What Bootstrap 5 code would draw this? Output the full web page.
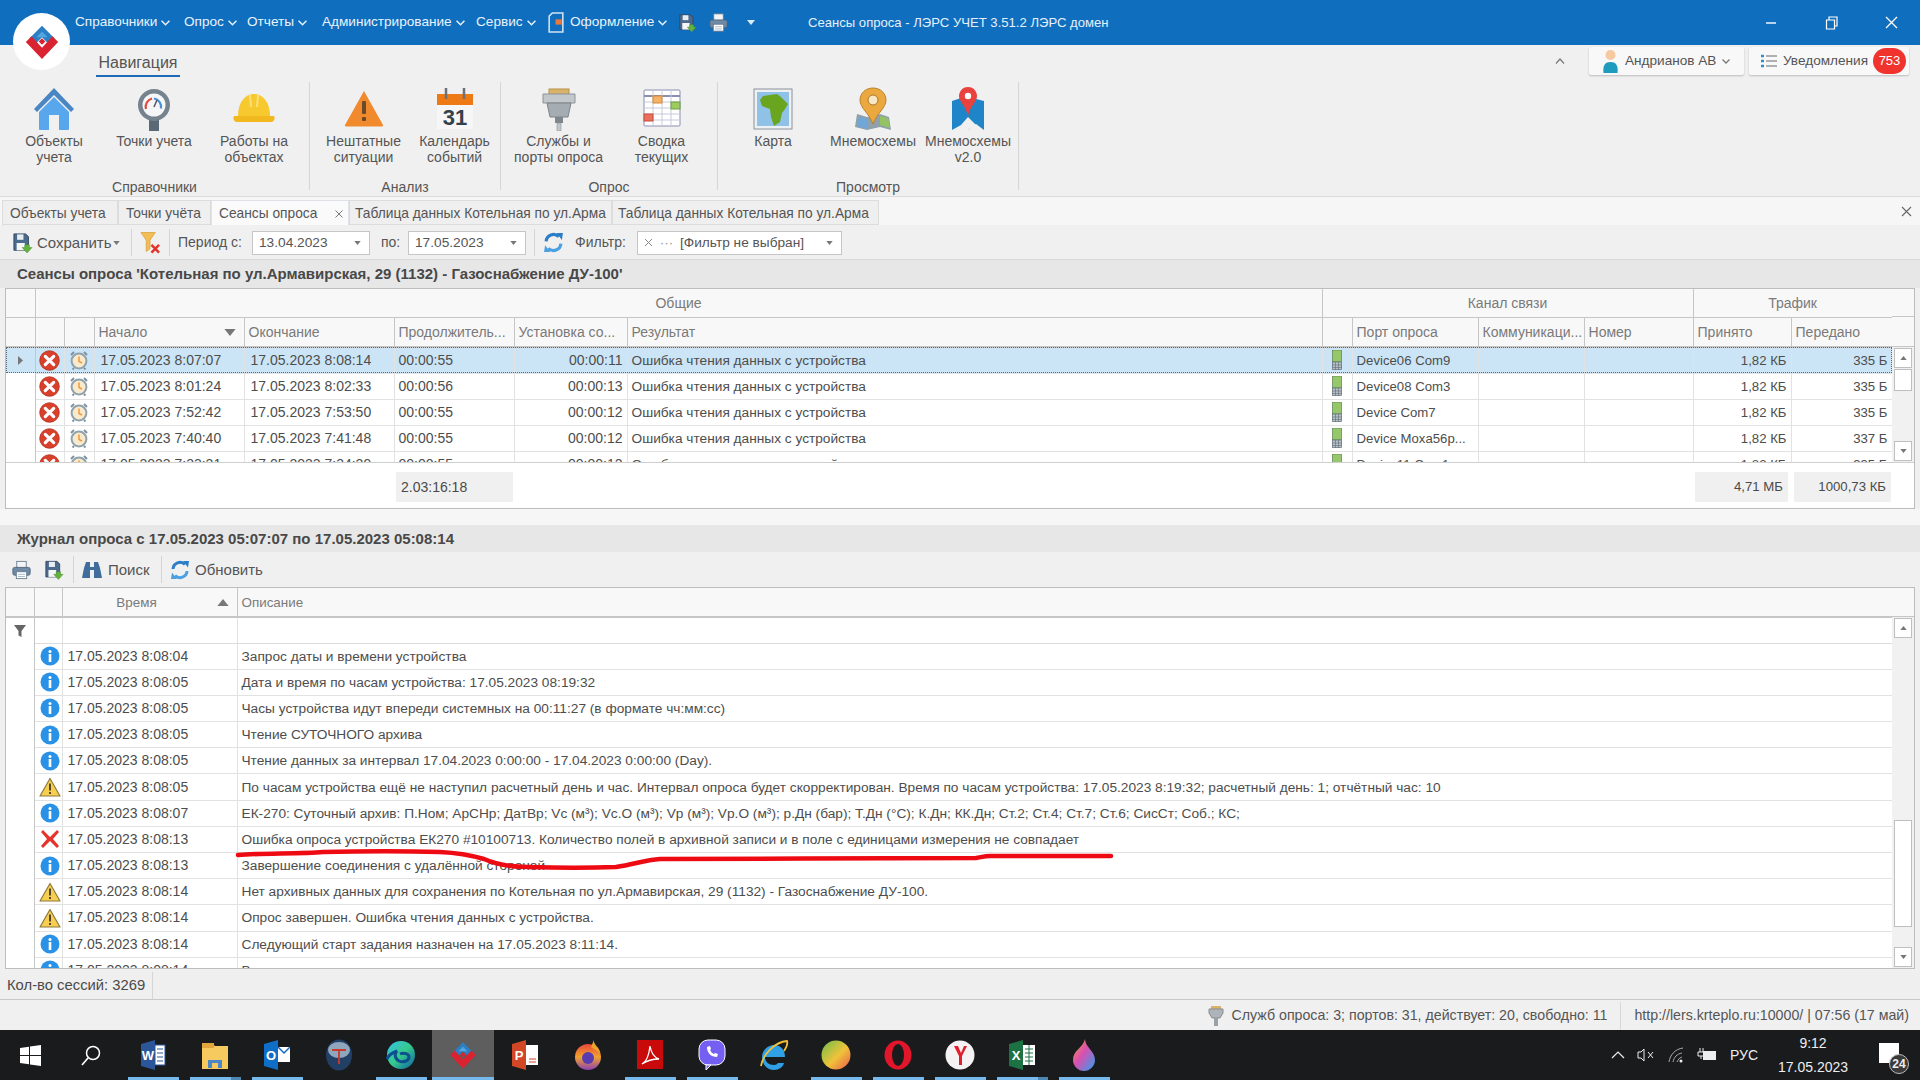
<!DOCTYPE html>
<html lang="ru"><head><meta charset="utf-8"><title>Сеансы опроса</title>
<link href="https://cdn.jsdelivr.net/npm/bootstrap@5.3.0/dist/css/bootstrap.min.css" rel="stylesheet">
<style>
html,body{height:1080px;overflow:hidden}
body{font:14px/1.2 "Liberation Sans",Arial,sans-serif;color:#4a4a4a;background:#f0f0f0}
svg{display:block;flex:none}
.app{height:1080px;width:1920px;position:relative;display:flex;flex-direction:column}
.logo{position:absolute;left:13px;top:13px;width:57px;height:57px;border-radius:50%;background:#fff;display:flex;align-items:center;justify-content:center;z-index:5}
.titlebar{height:45px;background:#0f6ebe;color:#fff;padding:0 0 0 75px;border:0;flex:none}
.menu{display:grid;grid-template-columns:109px 63px 75px 154px 71px 23px 109px 30px 38px 20px;align-items:center;font-size:13.6px}
.menu a{color:#eaf3fb;text-decoration:none;display:flex;align-items:center;gap:4px;white-space:nowrap}
.wtitle{margin-left:41px;width:300px;color:#e6f0fa;white-space:nowrap;font-size:13.1px}
.wctl{margin-left:auto;display:grid;grid-template-columns:60px 60px 60px;justify-items:center;padding-right:0;width:180px;margin-right:-1px}
.rtop{height:37px;display:flex;align-items:flex-start;padding-left:96px;flex:none}
.rtab{font-size:16px;height:32px;line-height:36px;border-bottom:2px solid #1b6bb5;color:#555;width:84px;white-space:nowrap;text-align:center}
.rright{margin-left:auto;display:flex;align-items:center;padding:2px 11px 0 0;gap:5px}
.collapse-up{margin-right:19px}
.ubtn{height:28px;background:#f8f8f8;box-shadow:0 1px 2px #bbb;border-radius:2px;display:flex;align-items:center;color:#555;position:relative;font-size:13.6px}
.ubtn.u1{width:155px;padding-left:13px;gap:6px}
.ubtn.u2{width:160px;padding-left:12px;gap:6px}
.nbadge{position:absolute;right:3px;top:1px;width:33px;height:26px;border-radius:13px;background:#f0332c;color:#fff;text-align:center;line-height:26px;font-size:13px}
.ribbon{height:115px;display:flex;border-bottom:1px solid #dcdcdc;flex:none;padding-bottom:7px;color:#555}
.rg{display:flex;flex-direction:column;border-right:1px solid #d6d6d6;height:108px}
.rg1{width:310px}.rg2{width:191px}.rg3{width:217px}.rg4{width:301px}
.ritems{display:grid;flex:1;padding-top:5px}
.rg1 .ritems{grid-template-columns:100px 100px 100px;padding-left:4px}
.rg2 .ritems{grid-template-columns:91px 91px;padding-left:8px}
.rg3 .ritems{grid-template-columns:103px 103px;padding-left:6px}
.rg4 .ritems{grid-template-columns:100px 100px 90px;padding-left:5px}
.ri{display:flex;flex-direction:column;align-items:center;text-align:center;line-height:16px;white-space:nowrap}
.ri svg{margin-bottom:2px}
.rlab{text-align:center;line-height:14px;height:14px;margin-bottom:-4px}
.tabsbar{height:28px;padding:3px 0 0 2px;background:#f6f6f6;flex:none;position:relative}
.tabsbar .nav-tabs{display:grid;grid-template-columns:116px 93px 138px 263px 267px;border:0;--bs-nav-link-padding-x:0;--bs-nav-link-padding-y:0}
.tabsbar .nav-link{height:25px;line-height:25px;background:#efefef;border:1px solid #dcdcdc;border-radius:0;margin:0;color:#555;padding:0 0 0 5px;white-space:nowrap;font-size:13.75px;text-align:left;display:flex;justify-content:space-between}
.tabsbar .nav-item:nth-child(-n+2) .nav-link{padding-left:7px}
.tabsbar .nav-link.active{background:#fafafa;color:#555;border-bottom:0;margin-top:0;position:relative;padding-left:7px}
.tabx{position:absolute;right:5px;top:9px}
.tb{display:grid;align-items:center;flex:none;white-space:nowrap;background:#f0f0f0;color:#555}
.tb1{padding:1px 0 0 13px;height:35px;border-bottom:1px solid #d8d8d8;grid-template-columns:24px 76px 18px 9px 29px 9px 74px 118px 38px 118px 17px 32px 62px 205px}
.tb2{padding-left:12px;height:35px;grid-template-columns:33px 28px 9px 26px 53px 9px 25px auto;justify-content:start}
.big{font-size:15px}
.vsep{width:1px;height:27px;background:#d4d4d4}
.tb .mid{justify-self:center}
.pl{padding-left:11px}
.ctl{height:24px;padding:0 0 0 6px;border:1px solid #c6c6c6;border-radius:0;background:#fff;color:#555;font-size:13.7px;display:flex;align-items:center;line-height:22px}
.dots{width:27px;text-align:center;color:#999}
.sect{background:#e7e7e7;font-weight:700;color:#484848;padding-left:17px;flex:none;display:flex;align-items:center;font-size:15px}
.s1{height:28px}.s2{height:27px}
.grid{margin-left:5px;width:1910px;border:1px solid #bdbdbd;background:#fff;flex:none}
.gw{width:1886px;overflow:hidden}
.grid .table{table-layout:fixed;width:1886px;margin:0;border-collapse:collapse;color:#4d4d4d;font-size:14px}
.grid .table td,.grid .table th{padding:0 4px;height:26px;border:1px solid #e2e2e2;white-space:nowrap;overflow:hidden;text-overflow:clip;font-weight:400;vertical-align:middle;box-shadow:none;line-height:15px}
.grid .table td.t{padding-left:6px}
.grid .table thead th{background:#f8f8f8;color:#7a7a7a;border-color:#c6c6c6;border-top:0;height:28px}
.g1 .table thead th{padding-top:2px}
.g2 .table thead th{font-size:13.4px}
.grid .table thead tr:last-child th{height:29px;border-bottom:2px solid #c6c6c6}
.g1 .table thead tr:last-child th{height:30px}
.grid .table thead th:first-child,.grid .table td:first-child{border-left:0}
.grid .table td.ind{border-top:0;border-bottom:0;border-right-color:#c6c6c6;padding:0}
.grid .table td.ic{padding:0}
.g2 .table td.ic{padding-left:3px}
.g2 .table td.t{padding-left:5px}
.ic svg{margin:auto}
.ind svg{margin:auto}
.hcen{margin-right:10px}
.grid .table td.desc{font-size:13.7px}
.grid .table td.lat{font-size:13.2px}
.grid .table tr.sel td{background:#cbe5f6}
tr.sel{outline:1px dotted #5d6a75;outline-offset:-1px}
.g1 .gw{height:173px}
.g2 .gw{height:380px}
.g2 .table td,.g2 .table td.ic{height:26.2px}
.g2 .table .fil td{height:26px;border-bottom-color:#dcdcdc}
.sb{width:22px;display:flex;flex-direction:column;flex:none;background:#f1f1f1}
.sbh{background:#f8f8f8;border-bottom:1px solid #c6c6c6;flex:none}
.sbb{width:18px;height:20px;margin:1px 2px;background:#fff;border:1px solid #bfbfbf;flex:none;display:flex;align-items:center;justify-content:center}
.sbt{width:18px;margin:0 2px;background:#fff;border:1px solid #bfbfbf;flex:none}
.gfoot{height:46px;padding-top:9px;display:grid;grid-template-columns:390px 117px 1182px 93px 6px 97px;border-top:1px solid #cfcfcf;align-items:stretch}
.gfoot div{height:30px;line-height:30px;padding:0 5px;background:#f0f0f0}
.gfoot .lat{font-size:13.2px}
.gfoot .none{background:none}
.bar3{height:28px;margin-top:3px;display:flex;flex:none;background:#efefef;border-bottom:1px solid #c8c8c8}
.bar3 span{width:153px;padding-left:7px;line-height:27px;border-right:1px solid #d5d5d5;white-space:nowrap;font-size:14.8px}
.status{height:30px;padding-top:2px;display:flex;align-items:center;justify-content:flex-end;background:#f0f0f0;flex:none;white-space:nowrap;color:#555;font-size:14.2px}
.status .a{display:flex;align-items:center;gap:8px;padding-right:13px;border-right:1px solid #d8d8d8;height:28px}
.status .b{padding:0 11px 0 13px}
.taskbar{height:50px;background:#1a1b1d;display:flex;flex:none;color:#eee;align-items:stretch;position:relative}
.tk{width:62.07px;display:flex;align-items:center;justify-content:center;position:relative;flex:none}
.tk.w{width:60px}
.tk.run::after{content:"";position:absolute;left:6px;right:5px;bottom:0;height:3px;background:#76b9ed}
.tk.stack::after{background:linear-gradient(90deg,#76b9ed 80%,#4f87b3 80%)}
.tk.act{background:#5e5e5e}
.tk.act::after{left:0;right:0}
.tray{margin-left:auto;display:flex;align-items:center;white-space:nowrap;gap:12.500px}
.clock{width:93px;text-align:center;font-size:14px;line-height:24px;margin:0 0 0 -4px;display:flex;flex-direction:column}
.notif{position:relative;width:60px;height:50px;margin-left:-12px}
.notif i{position:absolute;left:19px;top:13px;width:20px;height:20px;background:#fff}
.notif b{position:absolute;left:29px;top:24px;width:20px;height:20px;border-radius:50%;background:#3a3a3a;border:1px solid #bbb;font-size:12px;line-height:18px;text-align:center;font-style:normal}
.note{position:absolute;left:0;top:0;pointer-events:none;z-index:4}
</style></head><body>
<svg width="0" height="0" style="position:absolute">
<defs>
<linearGradient id="fx" x1="0" y1="0" x2="0" y2="1"><stop offset="0" stop-color="#e8463d"/><stop offset=".5" stop-color="#f0a32a"/><stop offset="1" stop-color="#8d3fb6"/></linearGradient>
<linearGradient id="flame" x1="0" y1="0" x2="1" y2="1"><stop offset="0" stop-color="#f0a23a"/><stop offset=".45" stop-color="#d94fb0"/><stop offset="1" stop-color="#2aa3f0"/></linearGradient>
<linearGradient id="ball" x1="0" y1="0" x2="1" y2="1"><stop offset="0" stop-color="#6cbf4b"/><stop offset=".55" stop-color="#f0c23a"/><stop offset="1" stop-color="#ea5a4a"/></linearGradient>
<linearGradient id="edge" x1="0" y1="0" x2="1" y2="1"><stop offset="0" stop-color="#35c1f1"/><stop offset=".5" stop-color="#36c98a"/><stop offset="1" stop-color="#0d5ea8"/></linearGradient>
</defs>
<symbol id="logo" viewBox="0 0 40 40"><polygon points="20,3 33,16 27,22 20,15 13,22 7,16" fill="#2b7fc4"/><polygon points="20,9 26,15 20,15 14,15" fill="#51a6e0"/><polygon points="3,20 9,14 20,26 31,14 37,20 20,38" fill="#d92330"/><polygon points="20,16 23.500,19.500 20,23 16.500,19.500" fill="#d92330"/></symbol>
<symbol id="err" viewBox="0 0 20 20"><circle cx="10" cy="10" r="9.300" fill="#d9402c" stroke="#b8321f" stroke-width=".8"/><path d="M6 6l8 8M14 6l-8 8" stroke="#fff" stroke-width="3" stroke-linecap="round"/></symbol>
<symbol id="clk" viewBox="0 0 20 20"><path d="M2 5l3-3M18 5l-3-3M5 18l-1.500 1.500M15 18l1.500 1.500" stroke="#7f929f" stroke-width="2"/><circle cx="10" cy="11" r="7.400" fill="#fbe9cc" stroke="#8ea2ae" stroke-width="2"/><path d="M10 6.500v5l3 1.500" stroke="#ee9a3a" stroke-width="1.500" fill="none"/></symbol>
<symbol id="inf" viewBox="0 0 20 20"><circle cx="10" cy="10" r="9.500" fill="#2a92e6"/><circle cx="10" cy="5.500" r="1.500" fill="#fff"/><rect x="8.700" y="8" width="2.600" height="8" fill="#fff"/></symbol>
<symbol id="wrn" viewBox="0 0 22 20"><path d="M11 1.500L21 19H1z" fill="#f6cf52" stroke="#8d7a3c" stroke-width="1.200" stroke-linejoin="round"/><rect x="10" y="6.500" width="2" height="7" fill="#55492a"/><rect x="10" y="15" width="2" height="2" fill="#55492a"/></symbol>
<symbol id="xr" viewBox="0 0 20 20"><path d="M3 1l7 7 7-7 2 2-6 7 6 7-2 2-7-7-7 7-2-2 6-7-6-7z" fill="#e4342b"/></symbol>
<symbol id="dev" viewBox="0 0 10 20"><rect x=".5" y="0" width="9" height="12" fill="#97c76b" stroke="#5b7f4e" stroke-width=".7"/><rect x=".5" y="12" width="9" height="7.500" fill="#b8c1c7" stroke="#5f6c75" stroke-width=".7"/><path d="M3.500 12v8M6.500 12v8M0 15h10M0 17.500h10" stroke="#5f6c75" stroke-width=".6"/></symbol>
<symbol id="save" viewBox="0 0 22 22"><path d="M1 1h13l3 3v15H1z" fill="#4a6a8e" stroke="#33465f"/><rect x="4.500" y="1.500" width="7" height="6" fill="#e8edf2"/><rect x="4" y="11" width="9" height="8" fill="#f4f6f8"/><path d="M13 13h5v3h3l-5.500 6L10 16h3z" fill="#63b23d" stroke="#4a8a2a" stroke-width=".5"/></symbol>
<symbol id="prn" viewBox="0 0 22 22"><rect x="5.500" y="1" width="11" height="8" fill="#f2f4f6" stroke="#66798c"/><rect x="1" y="8" width="20" height="9" rx="2" fill="#6e8aa6" stroke="#4d6378"/><rect x="5" y="13" width="12" height="8" fill="#fff" stroke="#66798c"/><path d="M7 16h8M7 18.500h8" stroke="#9db0c1"/></symbol>
<symbol id="fun" viewBox="0 0 22 24"><path d="M1 1h15l-5.500 8v9l-4 3V9z" fill="#f2bd55" stroke="#d89a2e" stroke-width=".7"/><path d="M12 14l8 8M20 14l-8 8" stroke="#e2342b" stroke-width="2.600"/></symbol>
<symbol id="rf" viewBox="0 0 20 20"><path d="M3 9a7 7 0 0 1 12-4.500" fill="none" stroke="#2c7dc8" stroke-width="3"/><path d="M13 1l6 0-1 6.500z" fill="#2c7dc8"/><path d="M17 11a7 7 0 0 1-12 4.500" fill="none" stroke="#4aa0e0" stroke-width="3"/><path d="M7 19l-6 0 1-6.500z" fill="#4aa0e0"/></symbol>
<symbol id="bin" viewBox="0 0 20 20"><path d="M4 2h4v5h4V2h4l2 6 2 10h-8V10H8v8H0L2 8z" fill="#3f6d9c"/></symbol>
<symbol id="car" viewBox="0 0 8 5"><path d="M0 0h8L4 5z" fill="#777"/></symbol>
<symbol id="chev" viewBox="0 0 8 5"><path d="M.5.5L4 4 7.500.5" fill="none" stroke="currentColor" stroke-width="1.300"/></symbol>
<symbol id="fil" viewBox="0 0 12 12"><path d="M0 0h12L7.500 6v6l-3-1.500V6z" fill="#666"/></symbol>
<symbol id="home" viewBox="0 0 44 44"><path d="M22 1L2 22l3 3L22 8l17 17 3-3z" fill="#4a86c4"/><path d="M7 25L22 10l15 15v17a1 1 0 0 1-1 1H8a1 1 0 0 1-1-1z" fill="#58a6ec"/><rect x="17" y="28" width="10" height="15" fill="#f0f0f0"/></symbol>
<symbol id="gauge" viewBox="0 0 44 44"><rect x="17" y="31" width="10" height="13" fill="#5b6875"/><circle cx="22" cy="18" r="16" fill="#75838f"/><circle cx="22" cy="18" r="11.500" fill="#f4f6f7"/><path d="M14 22a8.500 8.500 0 0 1 6-10.500" fill="none" stroke="#e0493a" stroke-width="2.200"/><path d="M22 11.500a8.500 8.500 0 0 1 7 10" fill="none" stroke="#4a90d9" stroke-width="2.200"/><path d="M22 20l3-7" stroke="#555" stroke-width="1.500"/></symbol>
<symbol id="helm" viewBox="0 0 44 44"><path d="M6 29C6 14 14 7 22 7s16 7 16 22z" fill="#f7c92f"/><path d="M2 29h40c2 4-1 6-4 6H6c-3 0-6-2-4-6z" fill="#f1b91f"/><path d="M18 8l1 12M26 8l-1 12" stroke="#fbe07a" stroke-width="2"/></symbol>
<symbol id="wor" viewBox="0 0 44 44"><path d="M22 4L41 38a1 1 0 0 1-1 1.500H4A1 1 0 0 1 3 38z" fill="#f08a2c"/><rect x="20" y="14" width="4" height="13" rx="1" fill="#6b4a2a"/><rect x="20" y="30" width="4" height="4" rx="1" fill="#6b4a2a"/></symbol>
<symbol id="bd9" viewBox="0 0 44 44"><rect x="12" y="2" width="20" height="6" fill="#d9b36a" stroke="#b89245"/><path d="M6 7h32v9H6z" fill="#c2c7cb" stroke="#8c9398"/><path d="M10 16h24l-3 14H13z" fill="#a5acb2" stroke="#7c848a"/><rect x="18" y="30" width="8" height="6" fill="#7f878d"/><rect x="20" y="36" width="4" height="8" fill="#c2c7cb" stroke="#8c9398" stroke-width=".6"/></symbol>
<symbol id="tblic" viewBox="0 0 44 44"><rect x="4" y="3" width="36" height="36" rx="1" fill="#fff" stroke="#8a8fb0"/><path d="M4 9h36" stroke="#8a8fb0" stroke-width="2"/><path d="M13 3v36M22 3v36M31 3v36M4 15h36M4 21h36M4 27h36M4 33h36" stroke="#c5c9dd"/><rect x="13" y="9" width="9" height="7" fill="#f4b26a" stroke="#d48a30"/><rect x="31" y="15" width="9" height="7" fill="#9ccb5f" stroke="#6f9f3c"/><rect x="4" y="27" width="9" height="7" fill="#ea6f5e" stroke="#c84c3c"/></symbol>
<symbol id="mapaf" viewBox="0 0 44 44"><rect x="3" y="2" width="38" height="40" fill="#eef1f3" stroke="#8a929a"/><rect x="6" y="5" width="32" height="34" fill="#8fc2e6"/><path d="M12 9l14-2 4 3 7 7-3 5-3 4-2 9-6 4-3-9-1-8-8-3-2-6z" fill="#6aa51f"/></symbol>
<symbol id="mapin" viewBox="0 0 44 44"><path d="M6 27l10 3 13-3 9 3 2 13-11-3-13 3-12-3z" fill="#8fa0aa"/><path d="M8 30l8 2v10l-10-3z" fill="#6fa8d8"/><path d="M29 29l8 2 2 10-10-3z" fill="#95c263"/><path d="M22 1c-8 0-13 6-13 12 0 8 9 13 13 24 4-11 13-16 13-24 0-6-5-12-13-12z" fill="#eba83e" stroke="#b9822c"/><circle cx="22" cy="13" r="5" fill="#f7e7c5" stroke="#a9772a"/></symbol>
<symbol id="mapin2" viewBox="0 0 44 44"><path d="M6 14l9-3v27l-9 5zM15 11l7 4v24l-7-1zM22 15l8-3 8 2v29l-8-6-8 6z" fill="#1f85c9"/><path d="M22 30l-7 8 7 5 8-5z" fill="#f0f0f0"/><path d="M22 0c-6 0-9 5-9 9 0 6 7 10 9 20 2-10 9-14 9-20 0-4-3-9-9-9z" fill="#e9413d"/><circle cx="22" cy="9" r="3.200" fill="#fff"/></symbol>
<symbol id="usr" viewBox="0 0 16 24"><circle cx="8" cy="6" r="5" fill="#f7c9a0"/><path d="M1 24c-1-8 2-11 7-11s8 3 7 11z" fill="#1f9bbd"/></symbol>
<symbol id="lst" viewBox="0 0 16 14"><path d="M5 2h11M5 7h11M5 12h11" stroke="#666" stroke-width="1.200"/><path d="M0 2h3M0 7h3M0 12h3" stroke="#2b8fd0" stroke-width="2.500"/></symbol>
<symbol id="conn" viewBox="0 0 16 20"><rect x="3" y="0" width="10" height="3" fill="#d9b36a"/><path d="M1 3h14v4L12 12H4L1 7z" fill="#aeb4b9" stroke="#858c92"/><rect x="6" y="12" width="4" height="8" fill="#9aa1a6"/></symbol>
</svg>
<div class="app">
<div class="logo"><svg width="38" height="38"><use href="#logo"/></svg></div>
<nav class="navbar titlebar flex-nowrap justify-content-start">
 <div class="menu">
  <a href="#">Справочники<svg width="9" height="6"><use href="#chev"/></svg></a>
  <a href="#">Опрос<svg width="9" height="6"><use href="#chev"/></svg></a>
  <a href="#">Отчеты<svg width="9" height="6"><use href="#chev"/></svg></a>
  <a href="#">Администрирование<svg width="9" height="6"><use href="#chev"/></svg></a>
  <a href="#">Сервис<svg width="9" height="6"><use href="#chev"/></svg></a>
  <svg width="18" height="21" viewBox="0 0 17 20"><path d="M5 1h10v18H2V4z" fill="none" stroke="#cfe3f5" stroke-width="1.500"/><rect x="8" y="7" width="6" height="5" fill="#e8793a"/></svg>
  <a href="#">Оформление<svg width="9" height="6"><use href="#chev"/></svg></a>
  <svg width="18" height="18"><use href="#save"/></svg>
  <svg width="19" height="19"><use href="#prn"/></svg>
  <svg width="8" height="5" viewBox="0 0 8 5"><path d="M0 0h8L4 5z" fill="#dcebf8"/></svg>
 </div>
 <span class="wtitle">Сеансы опроса - ЛЭРС УЧЕТ 3.51.2 ЛЭРС домен</span>
 <div class="wctl">
  <svg width="12" height="12" viewBox="0 0 12 12"><path d="M1 7h10" stroke="#fff" stroke-width="1.400"/></svg>
  <svg width="13" height="14" viewBox="0 0 13 14"><path d="M1.500 4h8v9h-8zM4 4V1h8v9H9.500" fill="none" stroke="#fff" stroke-width="1.200"/></svg>
  <svg width="13" height="13" viewBox="0 0 13 13"><path d="M1 1l11 11M12 1L1 12" stroke="#fff" stroke-width="1.300"/></svg>
 </div>
</nav>
<div class="rtop">
 <div class="rtab">Навигация</div>
 <div class="rright">
  <svg class="collapse-up" width="10" height="6" viewBox="0 0 10 6"><path d="M1 5.500L5 1l4 4.500" fill="none" stroke="#777" stroke-width="1.200"/></svg>
  <div class="ubtn u1"><svg width="17" height="24"><use href="#usr"/></svg>Андрианов АВ<svg width="8" height="5" style="color:#777"><use href="#chev"/></svg></div>
  <div class="ubtn u2"><svg width="16" height="14"><use href="#lst"/></svg>Уведомления<span class="nbadge">753</span></div>
 </div>
</div>
<div class="ribbon">
 <div class="rg rg1"><div class="ritems">
  <div class="ri"><svg width="44" height="44"><use href="#home"/></svg>Объекты<br>учета</div>
  <div class="ri"><svg width="44" height="44"><use href="#gauge"/></svg>Точки учета</div>
  <div class="ri"><svg width="44" height="44"><use href="#helm"/></svg>Работы на<br>объектах</div>
 </div><div class="rlab">Справочники</div></div>
 <div class="rg rg2"><div class="ritems">
  <div class="ri"><svg width="44" height="44"><use href="#wor"/></svg>Нештатные<br>ситуации</div>
  <div class="ri"><svg width="44" height="44" viewBox="0 0 44 44"><rect x="4" y="7" width="36" height="11" fill="#ee7a16"/><rect x="4" y="18" width="36" height="24" fill="#f6f6f6"/><path d="M13 1v11M31 1v11" stroke="#6b7177" stroke-width="2.500"/><text x="22" y="38" text-anchor="middle" font-family="Liberation Sans" font-weight="700" font-size="22" fill="#33414b">31</text></svg>Календарь<br>событий</div>
 </div><div class="rlab">Анализ</div></div>
 <div class="rg rg3"><div class="ritems">
  <div class="ri"><svg width="44" height="44"><use href="#bd9"/></svg>Службы и<br>порты опроса</div>
  <div class="ri"><svg width="44" height="44"><use href="#tblic"/></svg>Сводка<br>текущих</div>
 </div><div class="rlab">Опрос</div></div>
 <div class="rg rg4"><div class="ritems">
  <div class="ri"><svg width="44" height="44"><use href="#mapaf"/></svg>Карта</div>
  <div class="ri"><svg width="44" height="44"><use href="#mapin"/></svg>Мнемосхемы</div>
  <div class="ri"><svg width="44" height="44"><use href="#mapin2"/></svg>Мнемосхемы<br>v2.0</div>
 </div><div class="rlab">Просмотр</div></div>
</div>
<div class="tabsbar">
 <ul class="nav nav-tabs">
  <li class="nav-item"><a class="nav-link" href="#">Объекты учета</a></li>
  <li class="nav-item"><a class="nav-link" href="#">Точки учёта</a></li>
  <li class="nav-item"><a class="nav-link active" href="#">Сеансы опроса<svg class="tabx" width="8" height="8" viewBox="0 0 8 8"><path d="M.5.5l7 7M7.500.5l-7 7" stroke="#777"/></svg></a></li>
  <li class="nav-item"><a class="nav-link" href="#">Таблица данных Котельная по ул.Арма</a></li>
  <li class="nav-item"><a class="nav-link" href="#">Таблица данных Котельная по ул.Арма</a></li>
 </ul>
 <svg class="tabx" style="right:8px;top:9px" width="11" height="11" viewBox="0 0 11 11"><path d="M1 1l9 9M10 1l-9 9" stroke="#666" stroke-width="1.100"/></svg>
</div>
<div class="tb tb1">
 <svg width="20" height="20"><use href="#save"/></svg>
 <span class="big">Сохранить</span><svg width="7" height="4"><use href="#car"/></svg>
 <span class="vsep"></span>
 <svg width="21" height="24"><use href="#fun"/></svg>
 <span class="vsep"></span>
 <span>Период с:</span>
 <div class="ctl form-control">13.04.2023<svg class="ms-auto me-2" width="7" height="4"><use href="#car"/></svg></div>
 <span class="pl">по:</span>
 <div class="ctl form-control">17.05.2023<svg class="ms-auto me-2" width="7" height="4"><use href="#car"/></svg></div>
 <span class="vsep mid"></span>
 <svg width="21" height="21"><use href="#rf"/></svg>
 <span>Фильтр:</span>
 <div class="ctl form-control"><svg width="9" height="9" viewBox="0 0 9 9"><path d="M1 1l7 7M8 1L1 8" stroke="#888"/></svg><span class="dots">···</span><span>[Фильтр не выбран]</span><svg class="ms-auto me-2" width="7" height="4"><use href="#car"/></svg></div>
</div>
<div class="sect s1">Сеансы опроса 'Котельная по ул.Армавирская, 29 (1132) - Газоснабжение ДУ-100'</div>
<div class="grid g1 d-flex flex-column">
 <div class="d-flex">
  <div class="gw">
   <table class="table">
    <colgroup><col style="width:29px"><col style="width:29px"><col style="width:30px"><col style="width:150px"><col style="width:150px"><col style="width:120px"><col style="width:113px"><col style="width:695px"><col style="width:30px"><col style="width:126px"><col style="width:106px"><col style="width:109px"><col style="width:98px"><col style="width:101px"></colgroup>
    <thead>
     <tr><th></th><th colspan="7" class="text-center">Общие</th><th colspan="4" class="text-center">Канал связи</th><th colspan="2" class="text-center">Трафик</th></tr>
     <tr><th></th><th></th><th></th><th><div class="d-flex justify-content-between align-items-center">Начало<svg width="12" height="7" class="me-1"><use href="#car"/></svg></div></th><th>Окончание</th><th>Продолжитель...</th><th>Установка со...</th><th>Результат</th><th></th><th>Порт опроса</th><th>Коммуникаци...</th><th>Номер</th><th>Принято</th><th>Передано</th></tr>
    </thead>
    <tbody>
     <tr class="sel"><td class="ind"><svg width="5" height="9" viewBox="0 0 5 9"><path d="M0 0l5 4.500L0 9z" fill="#777"/></svg></td><td class="ic"><svg width="21" height="21"><use href="#err"/></svg></td><td class="ic"><svg width="20" height="20"><use href="#clk"/></svg></td><td class="t">17.05.2023 8:07:07</td><td class="t">17.05.2023 8:08:14</td><td>00:00:55</td><td class="text-end">00:00:11</td><td class="desc">Ошибка чтения данных с устройства</td><td class="ic"><svg width="10" height="20"><use href="#dev"/></svg></td><td class="lat">Device06 Com9</td><td></td><td></td><td class="text-end lat">1,82 КБ</td><td class="text-end lat">335 Б</td></tr>
     <tr><td class="ind"></td><td class="ic"><svg width="21" height="21"><use href="#err"/></svg></td><td class="ic"><svg width="20" height="20"><use href="#clk"/></svg></td><td class="t">17.05.2023 8:01:24</td><td class="t">17.05.2023 8:02:33</td><td>00:00:56</td><td class="text-end">00:00:13</td><td class="desc">Ошибка чтения данных с устройства</td><td class="ic"><svg width="10" height="20"><use href="#dev"/></svg></td><td class="lat">Device08 Com3</td><td></td><td></td><td class="text-end lat">1,82 КБ</td><td class="text-end lat">335 Б</td></tr>
     <tr><td class="ind"></td><td class="ic"><svg width="21" height="21"><use href="#err"/></svg></td><td class="ic"><svg width="20" height="20"><use href="#clk"/></svg></td><td class="t">17.05.2023 7:52:42</td><td class="t">17.05.2023 7:53:50</td><td>00:00:55</td><td class="text-end">00:00:12</td><td class="desc">Ошибка чтения данных с устройства</td><td class="ic"><svg width="10" height="20"><use href="#dev"/></svg></td><td class="lat">Device Com7</td><td></td><td></td><td class="text-end lat">1,82 КБ</td><td class="text-end lat">335 Б</td></tr>
     <tr><td class="ind"></td><td class="ic"><svg width="21" height="21"><use href="#err"/></svg></td><td class="ic"><svg width="20" height="20"><use href="#clk"/></svg></td><td class="t">17.05.2023 7:40:40</td><td class="t">17.05.2023 7:41:48</td><td>00:00:55</td><td class="text-end">00:00:12</td><td class="desc">Ошибка чтения данных с устройства</td><td class="ic"><svg width="10" height="20"><use href="#dev"/></svg></td><td class="lat">Device Moxa56p...</td><td></td><td></td><td class="text-end lat">1,82 КБ</td><td class="text-end lat">337 Б</td></tr>
     <tr><td class="ind"></td><td class="ic"><svg width="21" height="21"><use href="#err"/></svg></td><td class="ic"><svg width="20" height="20"><use href="#clk"/></svg></td><td class="t">17.05.2023 7:33:21</td><td class="t">17.05.2023 7:34:29</td><td>00:00:55</td><td class="text-end">00:00:12</td><td class="desc">Ошибка чтения данных с устройства</td><td class="ic"><svg width="10" height="20"><use href="#dev"/></svg></td><td class="lat">Device11 Com1</td><td></td><td></td><td class="text-end lat">1,82 КБ</td><td class="text-end lat">335 Б</td></tr>
    </tbody>
   </table>
  </div>
  <div class="sb">
   <div class="sbh" style="height:28px"></div><div class="sbh" style="height:30px"></div>
   <div class="sbb"><svg width="7" height="4" style="transform:rotate(180deg)"><use href="#car"/></svg></div>
   <div class="sbt" style="height:22px"></div>
   <div class="sbb mt-auto"><svg width="7" height="4"><use href="#car"/></svg></div>
  </div>
 </div>
 <div class="gfoot"><div class="none"></div><div>2.03:16:18</div><div class="none"></div><div class="text-end lat">4,71 МБ</div><div class="none"></div><div class="text-end lat">1000,73 КБ</div></div>
</div>
<div class="flex-none" style="height:16px;background:#f6f6f6"></div>
<div class="sect s2">Журнал опроса с 17.05.2023 05:07:07 по 17.05.2023 05:08:14</div>
<div class="tb tb2">
 <svg width="19" height="20"><use href="#prn"/></svg>
 <svg width="19" height="20"><use href="#save"/></svg>
 <span class="vsep"></span>
 <svg width="20" height="20"><use href="#bin"/></svg>
 <span class="big">Поиск</span>
 <span class="vsep"></span>
 <svg width="20" height="20"><use href="#rf"/></svg>
 <span class="big">Обновить</span>
</div>
<div class="grid g2 d-flex">
 <div class="gw">
  <table class="table">
   <colgroup><col style="width:28px"><col style="width:28px"><col style="width:175px"><col style="width:1655px"></colgroup>
   <thead><tr><th></th><th></th><th><div class="d-flex align-items-center"><span class="flex-grow-1 text-center hcen">Время</span><svg width="12" height="7" class="me-1" style="transform:rotate(180deg)"><use href="#car"/></svg></div></th><th>Описание</th></tr></thead>
   <tbody>
    <tr class="fil"><td class="ind"><svg width="12" height="12"><use href="#fil"/></svg></td><td></td><td></td><td></td></tr>
    <tr><td class="ind"></td><td class="ic"><svg width="20" height="20"><use href="#inf"/></svg></td><td class="t">17.05.2023 8:08:04</td><td class="desc">Запрос даты и времени устройства</td></tr>
    <tr><td class="ind"></td><td class="ic"><svg width="20" height="20"><use href="#inf"/></svg></td><td class="t">17.05.2023 8:08:05</td><td class="desc">Дата и время по часам устройства: 17.05.2023 08:19:32</td></tr>
    <tr><td class="ind"></td><td class="ic"><svg width="20" height="20"><use href="#inf"/></svg></td><td class="t">17.05.2023 8:08:05</td><td class="desc">Часы устройства идут впереди системных на 00:11:27 (в формате чч:мм:сс)</td></tr>
    <tr><td class="ind"></td><td class="ic"><svg width="20" height="20"><use href="#inf"/></svg></td><td class="t">17.05.2023 8:08:05</td><td class="desc">Чтение СУТОЧНОГО архива</td></tr>
    <tr><td class="ind"></td><td class="ic"><svg width="20" height="20"><use href="#inf"/></svg></td><td class="t">17.05.2023 8:08:05</td><td class="desc">Чтение данных за интервал 17.04.2023 0:00:00 - 17.04.2023 0:00:00 (Day).</td></tr>
    <tr><td class="ind"></td><td class="ic"><svg width="22" height="20"><use href="#wrn"/></svg></td><td class="t">17.05.2023 8:08:05</td><td class="desc">По часам устройства ещё не наступил расчетный день и час. Интервал опроса будет скорректирован. Время по часам устройства: 17.05.2023 8:19:32; расчетный день: 1; отчётный час: 10</td></tr>
    <tr><td class="ind"></td><td class="ic"><svg width="20" height="20"><use href="#inf"/></svg></td><td class="t">17.05.2023 8:08:07</td><td class="desc">ЕК-270: Суточный архив: П.Ном; АрСНр; ДатВр; Vс (м³); Vс.О (м³); Vр (м³); Vр.О (м³); р.Дн (бар); Т.Дн (°С); К.Дн; КК.Дн; Ст.2; Ст.4; Ст.7; Ст.6; СисСт; Соб.; КС;</td></tr>
    <tr><td class="ind"></td><td class="ic"><svg width="20" height="20"><use href="#xr"/></svg></td><td class="t">17.05.2023 8:08:13</td><td class="desc">Ошибка опроса устройства ЕК270 #10100713. Количество полей в архивной записи и в поле с единицами измерения не совпадает</td></tr>
    <tr><td class="ind"></td><td class="ic"><svg width="20" height="20"><use href="#inf"/></svg></td><td class="t">17.05.2023 8:08:13</td><td class="desc">Завершение соединения с удалённой стороной</td></tr>
    <tr><td class="ind"></td><td class="ic"><svg width="22" height="20"><use href="#wrn"/></svg></td><td class="t">17.05.2023 8:08:14</td><td class="desc">Нет архивных данных для сохранения по Котельная по ул.Армавирская, 29 (1132) - Газоснабжение ДУ-100.</td></tr>
    <tr><td class="ind"></td><td class="ic"><svg width="22" height="20"><use href="#wrn"/></svg></td><td class="t">17.05.2023 8:08:14</td><td class="desc">Опрос завершен. Ошибка чтения данных с устройства.</td></tr>
    <tr><td class="ind"></td><td class="ic"><svg width="20" height="20"><use href="#inf"/></svg></td><td class="t">17.05.2023 8:08:14</td><td class="desc">Следующий старт задания назначен на 17.05.2023 8:11:14.</td></tr>
    <tr><td class="ind"></td><td class="ic"><svg width="20" height="20"><use href="#inf"/></svg></td><td class="t">17.05.2023 8:08:14</td><td class="desc">Выполнение задания завершено</td></tr>
   </tbody>
  </table>
 </div>
 <div class="sb">
  <div class="sbh" style="height:29px"></div>
  <div class="sbb"><svg width="7" height="4" style="transform:rotate(180deg)"><use href="#car"/></svg></div>
  <div class="sbt" style="height:107px;margin-top:181px"></div>
  <div class="sbb mt-auto"><svg width="7" height="4"><use href="#car"/></svg></div>
 </div>
</div>
<div class="bar3"><span>Кол-во сессий: 3269</span></div>
<div class="status"><div class="a"><svg width="16" height="20"><use href="#conn"/></svg>Служб опроса: 3; портов: 31, действует: 20, свободно: 11</div><div class="b">http://lers.krteplo.ru:10000/ | 07:56 (17 май)</div></div>
<div class="taskbar">
 <div class="tk w"><svg width="21" height="21" viewBox="0 0 21 21"><path d="M0 3l9-1.300V10H0zM10 1.500L21 0v10H10zM0 11h9v8.300L0 18zM10 11h11v10l-11-1.500z" fill="#fff"/></svg></div>
 <div class="tk"><svg width="22" height="22" viewBox="0 0 22 22"><circle cx="13" cy="9" r="6.500" fill="none" stroke="#fff" stroke-width="1.500"/><path d="M8 14l-6 7" stroke="#fff" stroke-width="1.700"/></svg></div>
 <div class="tk run"><svg width="28" height="30" viewBox="0 0 28 30"><path d="M2 4l14-4v30L2 26z" fill="#2b579a"/><rect x="16" y="5" width="10" height="20" fill="#fff" stroke="#2b579a"/><path d="M18 9h6M18 13h6M18 17h6M18 21h6" stroke="#2b579a"/><text x="9" y="20" text-anchor="middle" fill="#fff" font-size="13" font-weight="700" font-family="Liberation Sans">W</text></svg></div>
 <div class="tk run stack"><svg width="28" height="30" viewBox="0 0 28 30"><path d="M1 3h10l3 3h13v23H1z" fill="#f7ca5f"/><rect x="1" y="3" width="12" height="5" fill="#e2a73c"/><path d="M7 28v-8h14v8h-4v-5h-6v5z" fill="#4d86c5"/></svg></div>
 <div class="tk run"><svg width="28" height="30" viewBox="0 0 28 30"><path d="M1 4l14-4v30L1 26z" fill="#0f6fc6"/><rect x="15" y="7" width="12" height="15" fill="#fff"/><path d="M15 7l6 6 6-6" fill="none" stroke="#0f6fc6" stroke-width="1.500"/><text x="8" y="20" text-anchor="middle" fill="#fff" font-size="13" font-weight="700" font-family="Liberation Sans">O</text></svg></div>
 <div class="tk"><svg width="28" height="32" viewBox="0 0 28 32"><ellipse cx="14" cy="16" rx="13" ry="15.500" fill="#223f66"/><ellipse cx="14" cy="11" rx="11" ry="8" fill="#8fa6bc"/><path d="M7 11h14M14 11v14" stroke="#c8392e" stroke-width="1.800"/></svg></div>
 <div class="tk run"><svg width="30" height="30" viewBox="0 0 30 30"><circle cx="15" cy="15" r="14" fill="url(#edge)"/><path d="M14 14c4-2 9 0 9 3 0 4-6 6-10 4-4-2-5-7-2-10-5 2-9 5-10 8" fill="none" stroke="#0d4f8f" stroke-width="3"/></svg></div>
 <div class="tk run act"><svg width="30" height="36"><use href="#logo"/></svg></div>
 <div class="tk"><svg width="28" height="30" viewBox="0 0 28 30"><path d="M1 4l14-4v30L1 26z" fill="#d24726"/><rect x="15" y="5" width="12" height="20" fill="#fff"/><path d="M18 19h7M18 22h7" stroke="#d24726"/><text x="8" y="20" text-anchor="middle" fill="#fff" font-size="13" font-weight="700" font-family="Liberation Sans">P</text></svg></div>
 <div class="tk"><svg width="28" height="30" viewBox="0 0 28 30"><circle cx="14" cy="17" r="13" fill="url(#fx)"/><circle cx="14" cy="18" r="6" fill="#5a3bb0"/><path d="M20 0c-1 5 6 7 6 13L17 7z" fill="#f0a32a"/></svg></div>
 <div class="tk run"><svg width="26" height="30" viewBox="0 0 26 30"><rect width="26" height="29" fill="#c80a0a"/><path d="M5 24c4-2 7-9 8-18 1 6 3 11 9 13-5 0-11 1-17 5z" fill="none" stroke="#fff" stroke-width="1.300"/></svg></div>
 <div class="tk run"><svg width="28" height="32" viewBox="0 0 28 32"><rect x="1" y="1" width="26" height="25" rx="9" fill="#7360f2" stroke="#fff"/><path d="M8 26v5l5-5z" fill="#7360f2" stroke="#fff"/><path d="M9 8c0 6 4 10 10 10l1-3-3-1-1 1c-2-1-3-2-4-4l1-1-1-3z" fill="#fff"/></svg></div>
 <div class="tk"><svg width="30" height="30" viewBox="0 0 30 30"><path d="M6 17h20C26 9 21 5 15 5S3 10 3 17s5 13 12 13c5 0 9-3 10-7h-6c-1 1-2 2-4 2-5 0-9-3-9-8z" fill="#2fa0e6"/><rect x="9" y="12" width="12" height="3" fill="#2fa0e6"/><path d="M2 26C4 14 16 2 28 1c1 3-1 7-3 10" fill="none" stroke="#f0c23a" stroke-width="1.800"/></svg></div>
 <div class="tk run"><svg width="30" height="30" viewBox="0 0 30 30"><circle cx="15" cy="15" r="14.500" fill="url(#ball)"/></svg></div>
 <div class="tk run"><svg width="28" height="30" viewBox="0 0 28 30"><ellipse cx="14" cy="15" rx="13.500" ry="14.500" fill="#e2162a"/><ellipse cx="14" cy="15" rx="6" ry="11" fill="#1a1b1d"/></svg></div>
 <div class="tk run"><svg width="30" height="30" viewBox="0 0 30 30"><circle cx="15" cy="15" r="14.500" fill="#f4f2f2"/><path d="M9 6l5 10v9h3V16l5-10h-3l-3 7-3-7z" fill="#e0202c"/></svg></div>
 <div class="tk run stack"><svg width="28" height="30" viewBox="0 0 28 30"><path d="M1 4l14-4v30L1 26z" fill="#1d7245"/><rect x="15" y="5" width="12" height="20" fill="#fff"/><path d="M17 9h8M17 13h8M17 17h8M17 21h8M21 5v20" stroke="#1d7245"/><text x="8" y="20" text-anchor="middle" fill="#fff" font-size="13" font-weight="700" font-family="Liberation Sans">X</text></svg></div>
 <div class="tk run"><svg width="24" height="32" viewBox="0 0 24 32"><path d="M13 0c0 8 10 12 10 21 0 6-5 11-11 11S1 27 1 21C1 11 11 9 13 0z" fill="url(#flame)"/></svg></div>
 <div class="tray">
  <svg width="14" height="8" viewBox="0 0 14 8"><path d="M1 7l6-6 6 6" fill="none" stroke="#eee" stroke-width="1.200"/></svg>
  <svg width="18" height="14" viewBox="0 0 18 14"><path d="M1 4h3l3-3v12l-3-3H1z" fill="none" stroke="#eee"/><path d="M11 4l5 6M16 4l-5 6" stroke="#eee"/></svg>
  <svg width="17" height="16" viewBox="0 0 17 16"><path d="M1 15C2 8 7 2 15 1M5 15c1-5 4-8 9-9M9 15c1-2 2-4 5-5" fill="none" stroke="#aaa"/><circle cx="13" cy="14" r="1.500" fill="#eee"/></svg>
  <svg width="20" height="14" viewBox="0 0 20 14"><path d="M3 0v4M6 0v4M1 4h7v4H1zM4 8v3" stroke="#eee" fill="none"/><rect x="6" y="3" width="13" height="9" fill="#eee"/></svg>
  <span>РУС</span>
  <div class="clock"><span>9:12</span><span>17.05.2023</span></div>
  <div class="notif"><i></i><b>24</b></div>
 </div>
</div>
<svg class="note" width="1920" height="1080" viewBox="0 0 1920 1080"><path d="M238 855C260 853 300 854 323 852C360 851 410 851 440 852C460 853 470 855 484 859C500 866 515 867 528 867C560 868 590 868 616 867C635 864 645 860 660 859C760 858 880 859 976 858C982 857 985 856 990 856C1030 856 1080 856 1111 856" fill="none" stroke="#ee0a12" stroke-width="4.500" stroke-linecap="round"/></svg>
</div>
<script src="https://cdn.jsdelivr.net/npm/bootstrap@5.3.0/dist/js/bootstrap.bundle.min.js"></script>
</body></html>
